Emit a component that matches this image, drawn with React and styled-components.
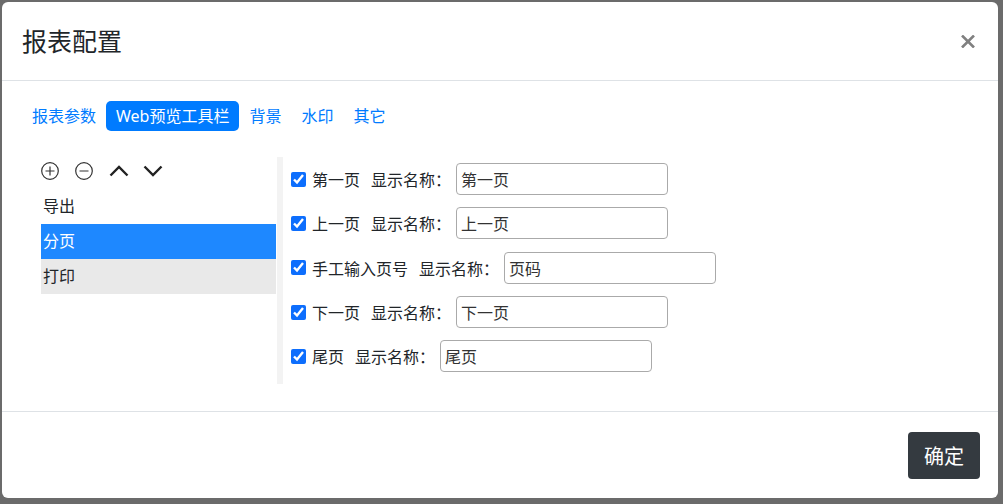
import React, { useState } from 'react';
import styled, { createGlobalStyle } from 'styled-components';

const GlobalStyle = createGlobalStyle`
  html, body {
    margin: 0;
    padding: 0;
    background: #6b6b6b;
    font-family: "Noto Sans", "Noto Sans CJK SC", sans-serif;
    color: #212529;
  }
  * { box-sizing: border-box; }
`;

const Modal = styled.div`
  margin: 2px;
  width: 996px;
  height: 496px;
  background: #fff;
  border-radius: 6px;
  display: flex;
  flex-direction: column;
  overflow: hidden;
`;

const Header = styled.div`
  height: 79px;
  padding: 0 22px 0 20px;
  display: flex;
  align-items: center;
  justify-content: space-between;
  border-bottom: 1px solid #dee2e6;
`;

const Title = styled.h5`
  margin: 0;
  font-size: 25px;
  font-weight: 400;
  line-height: 38px;
  color: #212529;
`;

const CloseButton = styled.button`
  background: none;
  border: none;
  padding: 0;
  width: 16px;
  height: 16px;
  display: flex;
  align-items: center;
  justify-content: center;
  cursor: pointer;
`;

const Body = styled.div`
  flex: 1;
  padding: 20px 20px 0 20px;
`;

const Tabs = styled.nav`
  display: flex;
  align-items: center;
`;

const Tab = styled.a`
  padding: 4px 10px;
  font-size: 16px;
  line-height: 22px;
  border-radius: 5px;
  color: ${p => (p.$active ? '#fff' : '#007bff')};
  background: ${p => (p.$active ? '#007bff' : 'transparent')};
  cursor: pointer;
`;

const Content = styled.div`
  display: flex;
  margin-top: 26px;
  padding-left: 19px;
`;

const LeftColumn = styled.div`
  width: 235px;
`;

const Toolbar = styled.div`
  height: 28px;
  display: flex;
  align-items: center;
  gap: 16px;
`;

const IconButton = styled.span`
  display: flex;
  align-items: center;
  justify-content: center;
  width: 18px;
  height: 18px;
  cursor: pointer;
  &:nth-child(n + 3) {
    width: 20px;
    margin-right: -2px;
  }
`;

const List = styled.ul`
  list-style: none;
  margin: 4px 0 0;
  padding: 0;
`;

const ListItem = styled.li`
  height: 35px;
  line-height: 35px;
  padding-left: 2px;
  font-size: 16px;
  color: ${p => (p.$selected ? '#fff' : '#212529')};
  background: ${p => (p.$selected ? '#1e88ff' : p.$hover ? '#e9e9e9' : 'transparent')};
  cursor: pointer;
`;

const Divider = styled.div`
  width: 6px;
  margin-left: 1px;
  background: #f3f3f3;
  height: 227px;
`;

const RightColumn = styled.div`
  padding-left: 8px;
`;

const Row = styled.div`
  height: 44.3px;
  display: flex;
  align-items: center;
  font-size: 16px;
`;

const Check = styled.input`
  width: 15px;
  height: 15px;
  margin: 0 6px 0 0;
  accent-color: #0d6efd;
`;

const Label = styled.span`
  margin-right: 11px;
`;

const FieldLabel = styled.span`
  margin-right: 5px;
`;

const NameInput = styled.input`
  width: 212px;
  height: 32px;
  border: 1px solid #aaa;
  border-radius: 4px;
  padding: 0 4px;
  font-size: 16px;
  font-family: inherit;
  color: #333;
  outline: none;
`;

const Footer = styled.div`
  height: 87px;
  border-top: 1px solid #dee2e6;
  display: flex;
  align-items: center;
  justify-content: flex-end;
  padding: 0 18px;
`;

const PrimaryButton = styled.button`
  width: 72px;
  height: 47px;
  border: none;
  border-radius: 4px;
  background: #343a40;
  color: #fff;
  font-size: 20px;
  font-family: inherit;
  cursor: pointer;
`;

const CirclePlus = () => (
  <svg width="18" height="18" viewBox="0 0 18 18" fill="none" stroke="#333" strokeWidth="1.2">
    <circle cx="9" cy="9" r="8.3" />
    <path d="M9 4.5v9M4.5 9h9" />
  </svg>
);

const CircleMinus = () => (
  <svg width="18" height="18" viewBox="0 0 18 18" fill="none" stroke="#333" strokeWidth="1.2">
    <circle cx="9" cy="9" r="8.3" />
    <path d="M4.5 9h9" />
  </svg>
);

const ChevronUp = () => (
  <svg width="20" height="12" viewBox="0 0 20 12" fill="none" stroke="#222" strokeWidth="2.4">
    <path d="M1.5 10.5L10 2l8.5 8.5" />
  </svg>
);

const ChevronDown = () => (
  <svg width="20" height="12" viewBox="0 0 20 12" fill="none" stroke="#222" strokeWidth="2.4">
    <path d="M1.5 1.5L10 10l8.5-8.5" />
  </svg>
);

const tabs = ['报表参数', 'Web预览工具栏', '背景', '水印', '其它'];
const items = ['导出', '分页', '打印'];
const rows = [
  { label: '第一页', value: '第一页' },
  { label: '上一页', value: '上一页' },
  { label: '手工输入页号', value: '页码' },
  { label: '下一页', value: '下一页' },
  { label: '尾页', value: '尾页' },
];

export default function App() {
  const [activeTab, setActiveTab] = useState(1);
  const [selected, setSelected] = useState(1);

  return (
    <>
      <GlobalStyle />
      <Modal>
        <Header>
          <Title>报表配置</Title>
          <CloseButton aria-label="关闭">
            <svg width="14" height="13" viewBox="0 0 14 13" stroke="#808080" strokeWidth="2.6">
              <path d="M1 0.5l12 12M13 0.5l-12 12" />
            </svg>
          </CloseButton>
        </Header>
        <Body>
          <Tabs>
            {tabs.map((t, i) => (
              <Tab key={t} $active={i === activeTab} onClick={() => setActiveTab(i)}>
                {t}
              </Tab>
            ))}
          </Tabs>
          <Content>
            <LeftColumn>
              <Toolbar>
                <IconButton><CirclePlus /></IconButton>
                <IconButton><CircleMinus /></IconButton>
                <IconButton><ChevronUp /></IconButton>
                <IconButton><ChevronDown /></IconButton>
              </Toolbar>
              <List>
                {items.map((it, i) => (
                  <ListItem
                    key={it}
                    $selected={i === selected}
                    $hover={i === 2}
                    onClick={() => setSelected(i)}
                  >
                    {it}
                  </ListItem>
                ))}
              </List>
            </LeftColumn>
            <Divider />
            <RightColumn>
              {rows.map(r => (
                <Row key={r.label}>
                  <Check type="checkbox" defaultChecked />
                  <Label>{r.label}</Label>
                  <FieldLabel>显示名称：</FieldLabel>
                  <NameInput defaultValue={r.value} />
                </Row>
              ))}
            </RightColumn>
          </Content>
        </Body>
        <Footer>
          <PrimaryButton>确定</PrimaryButton>
        </Footer>
      </Modal>
    </>
  );
}
